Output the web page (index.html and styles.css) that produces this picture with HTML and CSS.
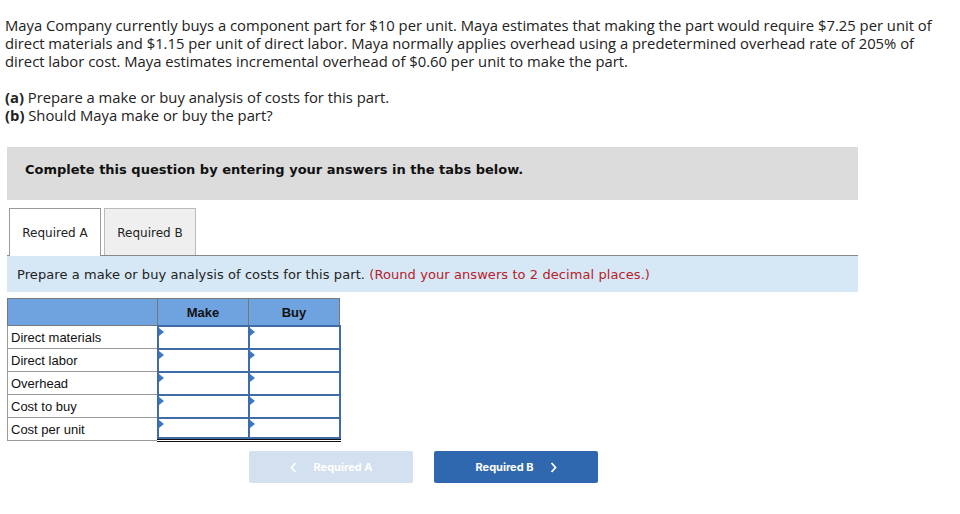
FILE: index.html
```html
<!DOCTYPE html>
<html>
<head>
<meta charset="utf-8">
<link rel="stylesheet" href="styles.css">
</head>
<body>
<div class="page">
  <p class="intro">Maya Company currently buys a component part for $10 per unit. Maya estimates that making the part would require $7.25 per unit of direct materials and $1.15 per unit of direct labor. Maya normally applies overhead using a predetermined overhead rate of 205% of direct labor cost. Maya estimates incremental overhead of $0.60 per unit to make the part.</p>
  <p class="reqs"><b>(a)</b> Prepare a make or buy analysis of costs for this part.<br><b>(b)</b> Should Maya make or buy the part?</p>

  <div class="banner">Complete this question by entering your answers in the tabs below.</div>

  <div class="tabs">
    <div class="tab active">Required A</div>
    <div class="tab">Required B</div>
  </div>
  <div class="instr">Prepare a make or buy analysis of costs for this part. <span class="red">(Round your answers to 2 decimal places.)</span></div>

  <table class="grid">
    <thead>
      <tr><th class="lbl"></th><th>Make</th><th>Buy</th></tr>
    </thead>
    <tbody>
      <tr><td class="lbl">Direct materials</td><td class="in"><span class="tri"></span></td><td class="in"><span class="tri"></span></td></tr>
      <tr><td class="lbl">Direct labor</td><td class="in"><span class="tri"></span></td><td class="in"><span class="tri"></span></td></tr>
      <tr><td class="lbl">Overhead</td><td class="in"><span class="tri"></span></td><td class="in"><span class="tri"></span></td></tr>
      <tr><td class="lbl">Cost to buy</td><td class="in"><span class="tri"></span></td><td class="in"><span class="tri"></span></td></tr>
      <tr class="last"><td class="lbl">Cost per unit</td><td class="in"><span class="tri"></span></td><td class="in"><span class="tri"></span></td></tr>
    </tbody>
  </table>

  <div class="nav">
    <div class="btn prev"><svg class="chev" width="7" height="11" viewBox="0 0 7 11"><polyline points="5.5,1 1.5,5.5 5.5,10" fill="none" stroke="#fff" stroke-width="1.8"/></svg><span>Required A</span></div>
    <div class="btn next"><span>Required B</span><svg class="chev r" width="7" height="11" viewBox="0 0 7 11"><polyline points="1.5,1 5.5,5.5 1.5,10" fill="none" stroke="#fff" stroke-width="1.8"/></svg></div>
  </div>
</div>
</body>
</html>
```
FILE: styles.css
```css
* { box-sizing: border-box; }
body { margin: 0; background: #fff; }
.intro {
  margin: 0;
  padding: 16px 0 0 5px;
  width: 945px;
  font-family: "Open Sans", "Lato", sans-serif;
  font-size: 14.8px;
  line-height: 18px;
  color: #222;
}
.reqs {
  margin: 0;
  padding: 18px 0 0 5px;
  font-family: "Open Sans", "Lato", sans-serif;
  font-size: 14.8px;
  line-height: 18px;
  color: #222;
}
.reqs b { font-weight: 700; }
.banner {
  margin: 23px 0 0 7px;
  width: 851px;
  height: 53px;
  background: #dcdcdc;
  padding: 15px 0 0 18px;
  font-family: "DejaVu Sans", Verdana, sans-serif;
  font-weight: bold;
  font-size: 13px;
  color: #111;
}
.tabs {
  display: flex;
  gap: 3px;
  margin: 8px 0 0 9px;
  height: 47px;
}
.tab {
  width: 92px;
  height: 47px;
  border: 1px solid #bbb;
  border-bottom: none;
  background: #efefef;
  padding-top: 1px;
  font-family: "DejaVu Sans", Verdana, sans-serif;
  font-size: 12px;
  color: #222;
  display: flex;
  align-items: center;
  justify-content: center;
}
.tab.active {
  background: #fff;
  border-color: #999;
  height: 48px;
  position: relative;
  z-index: 1;
}
.instr {
  margin: 0 0 0 7px;
  width: 851px;
  height: 37px;
  border-top: 1px solid #888;
  background: #d6e8f6;
  padding: 11px 0 0 10px;
  font-family: "DejaVu Sans", Verdana, sans-serif;
  font-size: 13px;
  letter-spacing: 0.08px;
  color: #222;
}
.red { color: #b8202a; }
.grid {
  margin: 6px 0 0 7px;
  border-collapse: collapse;
  font-family: "Liberation Sans", Arial, sans-serif;
  font-size: 13px;
}
.grid th {
  background: #6ea3e0;
  border: 1px solid #777;
  height: 27px;
  width: 91px;
  font-weight: bold;
  font-size: 13px;
  color: #111;
  vertical-align: top;
  padding-top: 6px;
}
.grid th.lbl { width: 150px; }
.grid td {
  height: 23px;
  padding: 0;
}
.grid td.lbl {
  border: 1px solid #999;
  padding: 1px 0 0 3px;
  color: #111;
}
.grid td.in {
  border: 2px solid #3f6ba6;
  position: relative;
  background: #fff;
}
.tri {
  position: absolute;
  left: 0;
  top: 1px;
  width: 0;
  height: 0;
  border-top: 4px solid transparent;
  border-bottom: 4px solid transparent;
  border-left: 5px solid #3c78c8;
}
.grid tr.last td.in {
  border-top: 2px solid #1d3e6e;
  border-bottom: 3px double #111;
  box-shadow: inset 0 -2px 0 #3f6ba6;
}
.nav {
  display: flex;
  gap: 21px;
  margin: 9px 0 0 249px;
}
.btn {
  width: 164px;
  height: 32px;
  border-radius: 2px;
  display: flex;
  align-items: center;
  justify-content: center;
  font-family: "Inter", "Roboto", sans-serif;
  font-weight: bold;
  font-size: 11px;
  color: #fff;
}
.btn.prev { background: #d3e0ef; }
.btn.next { background: #3068b0; }
.chev { display: block; margin-right: 17px; }
.chev.r { margin: 0 0 0 16px; }
```
